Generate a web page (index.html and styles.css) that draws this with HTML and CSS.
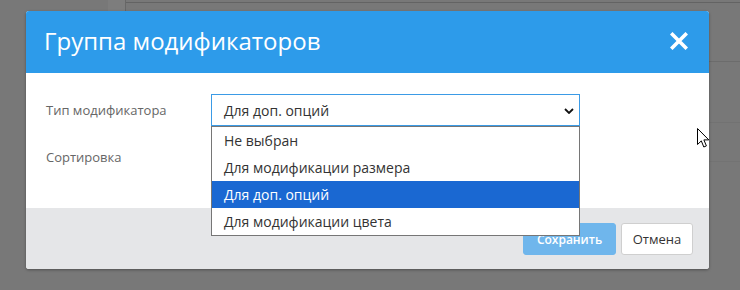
FILE: index.html
```html
<!DOCTYPE html>
<html lang="ru">
<head>
<meta charset="utf-8">
<title>Группа модификаторов</title>
<link rel="stylesheet" href="styles.css">
</head>
<body>
<div class="app">
  <div class="sidebar"></div>
  <div class="rail"></div>
  <div class="main">
    <div class="row r1"></div>
    <div class="row r2"></div>
    <div class="row r3"></div>
    <div class="row r4"></div>
  </div>
</div>

<div class="modal">
  <div class="modal-header">
    <h1 class="modal-title">Группа модификаторов</h1>
    <svg class="close" width="18" height="18" viewBox="0 0 18 18"><path d="M2.5 2.5 L15.5 15.5 M15.5 2.5 L2.5 15.5" stroke="#fff" stroke-width="3.6" stroke-linecap="square"/></svg>
  </div>
  <div class="modal-body">
    <div class="field">
      <label class="label">Тип модификатора</label>
      <div class="select">
        <span>Для доп. опций</span>
        <svg class="chev" width="10" height="6" viewBox="0 0 10 6"><path d="M1 1 L5 5 L9 1" fill="none" stroke="#111" stroke-width="1.8"/></svg>
      </div>
    </div>
    <div class="field">
      <label class="label">Сортировка</label>
      <div class="input"></div>
    </div>
  </div>
  <div class="modal-footer">
    <button class="btn btn-primary">Сохранить</button>
    <button class="btn btn-default">Отмена</button>
  </div>
  <ul class="dropdown">
    <li>Не выбран</li>
    <li>Для модификации размера</li>
    <li class="active">Для доп. опций</li>
    <li>Для модификации цвета</li>
  </ul>
</div>

<svg class="cursor" width="14" height="21" viewBox="0 0 14 21"><path d="M0.5 0.5 L0.5 16.5 L4.3 12.9 L6.8 19 L9.4 17.9 L6.9 11.9 L11.8 11.9 Z" fill="#fff" stroke="#000" stroke-width="1" stroke-linejoin="miter"/></svg>
</body>
</html>
```

FILE: styles.css
```css
* { box-sizing: border-box; }
html, body { margin: 0; padding: 0; }
body {
  width: 740px;
  height: 290px;
  overflow: hidden;
  background: #787878;
  font-family: "Open Sans", "Noto Sans", sans-serif;
  position: relative;
}
.app {
  display: flex;
  align-items: flex-start;
  height: 290px;
}
.sidebar { width: 108px; height: 290px; background: #787878; }
.rail { width: 18px; height: 60px; background: #7d7d7d; border-right: 1px solid #676767; }
.main { flex: 1; display: flex; flex-direction: column; }
.row { border-bottom: 1px solid #6c6c6c; }
.r1 { height: 3px; border-bottom-color: #636363; }
.r2 { height: 59px; }
.r3 { height: 61px; border-bottom-color: #727272; }
.r4 { height: 39px; border-bottom-color: #737373; }

.modal {
  position: absolute;
  left: 26px;
  top: 11px;
  width: 683px;
  height: 258px;
  border-radius: 3px;
  background: #fff;
  box-shadow: 0 1px 3px rgba(0,0,0,0.35);
  display: flex;
  flex-direction: column;
}
.modal-header {
  height: 62px;
  background: #2d9bea;
  border-radius: 3px 3px 0 0;
  display: flex;
  align-items: center;
  justify-content: space-between;
  padding: 0 21px 0 18px;
}
.modal-title {
  margin: 0;
  color: #fff;
  font-weight: 400;
  font-size: 24px;
  line-height: 1;
  padding-bottom: 2px;
}
.close { display: block; margin-top: -2px; }

.modal-body {
  height: 135px;
  padding: 21px 0 0 20px;
  display: flex;
  flex-direction: column;
  gap: 15px;
}
.field {
  display: flex;
  align-items: center;
  height: 32px;
}
.label {
  width: 165px;
  font-size: 13px;
  color: #666;
}
.select {
  width: 369px;
  height: 32px;
  border: 1px solid #3b9be6;
  display: flex;
  align-items: center;
  justify-content: space-between;
  padding: 0 5px 0 12px;
  font-size: 14px;
  color: #333;
}
.chev { display: block; margin-top: 1px; }
.input {
  width: 369px;
  height: 32px;
  border: 1px solid #ccc;
}

.modal-footer {
  flex: 1;
  background: #e5e6e8;
  border-radius: 0 0 3px 3px;
  display: flex;
  justify-content: flex-end;
  align-items: flex-start;
  gap: 5px;
  padding: 15px 16px 0 0;
}
.btn {
  height: 32px;
  border-radius: 3px;
  font-family: "Open Sans", "Noto Sans", sans-serif;
  font-size: 13px;
  padding: 0;
  margin: 0;
}
.btn-primary {
  width: 93px;
  background: #6fb6ec;
  border: 1px solid #6fb6ec;
  color: #fff;
  font-size: 12px;
  font-weight: 600;
}
.btn-default {
  width: 72px;
  background: #fff;
  border: 1px solid #cfcfcf;
  color: #333;
}

.dropdown {
  position: absolute;
  left: 185px;
  top: 115px;
  width: 369px;
  margin: 0;
  padding: 0;
  list-style: none;
  background: #fff;
  border: 1px solid #767676;
}
.dropdown li {
  height: 27px;
  line-height: 27px;
  padding-left: 12px;
  font-size: 14px;
  color: #333;
}
.dropdown li.active {
  background: #1a68d2;
  color: #fff;
}
.cursor {
  position: absolute;
  left: 697px;
  top: 128px;
}
```
